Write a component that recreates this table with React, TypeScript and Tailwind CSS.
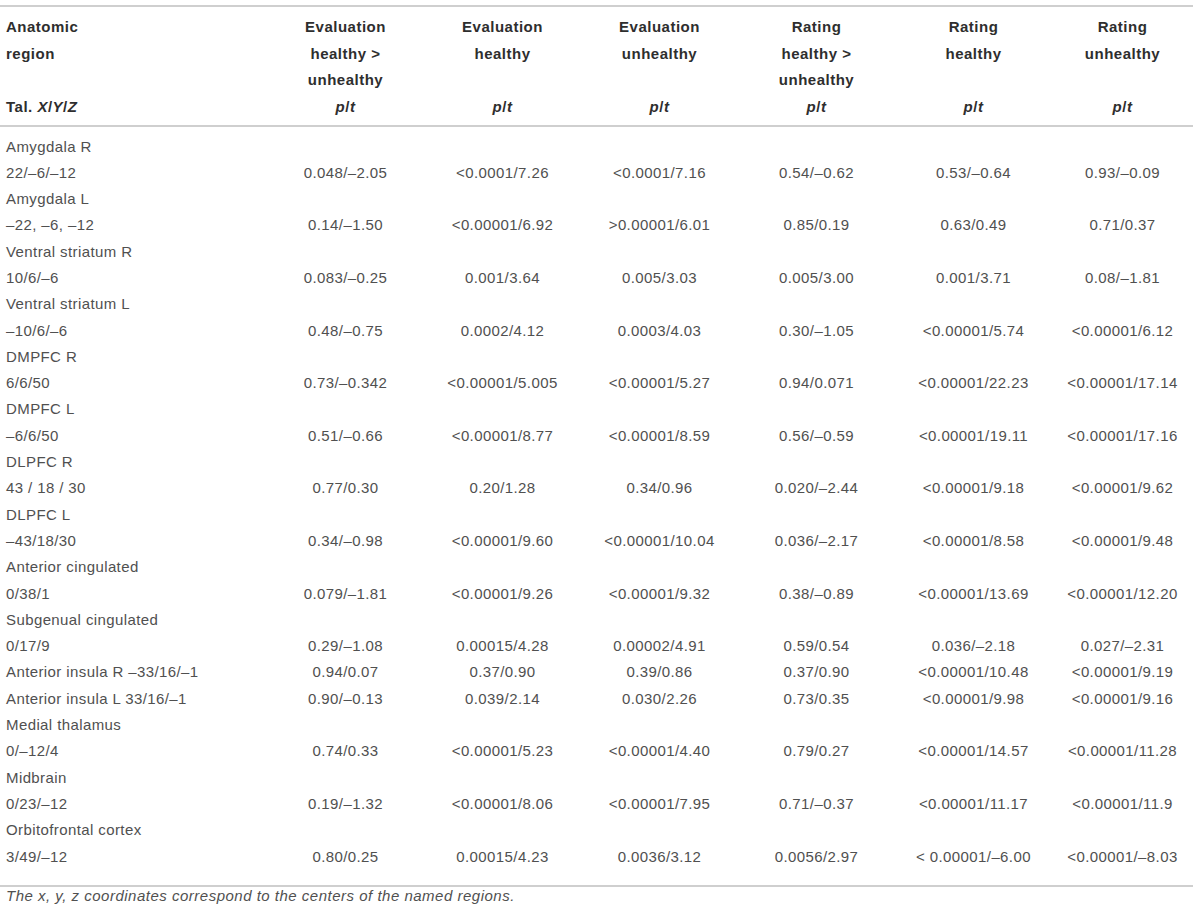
import React from "react";

type Row =
  | { name: string; coord: string; v: string[] }
  | { single: string; v: string[] };

const rows: Row[] = [
  { name: "Amygdala R", coord: "22/–6/–12", v: ["0.048/–2.05", "<0.0001/7.26", "<0.0001/7.16", "0.54/–0.62", "0.53/–0.64", "0.93/–0.09"] },
  { name: "Amygdala L", coord: "–22, –6, –12", v: ["0.14/–1.50", "<0.00001/6.92", ">0.00001/6.01", "0.85/0.19", "0.63/0.49", "0.71/0.37"] },
  { name: "Ventral striatum R", coord: "10/6/–6", v: ["0.083/–0.25", "0.001/3.64", "0.005/3.03", "0.005/3.00", "0.001/3.71", "0.08/–1.81"] },
  { name: "Ventral striatum L", coord: "–10/6/–6", v: ["0.48/–0.75", "0.0002/4.12", "0.0003/4.03", "0.30/–1.05", "<0.00001/5.74", "<0.00001/6.12"] },
  { name: "DMPFC R", coord: "6/6/50", v: ["0.73/–0.342", "<0.00001/5.005", "<0.00001/5.27", "0.94/0.071", "<0.00001/22.23", "<0.00001/17.14"] },
  { name: "DMPFC L", coord: "–6/6/50", v: ["0.51/–0.66", "<0.00001/8.77", "<0.00001/8.59", "0.56/–0.59", "<0.00001/19.11", "<0.00001/17.16"] },
  { name: "DLPFC R", coord: "43 / 18 / 30", v: ["0.77/0.30", "0.20/1.28", "0.34/0.96", "0.020/–2.44", "<0.00001/9.18", "<0.00001/9.62"] },
  { name: "DLPFC L", coord: "–43/18/30", v: ["0.34/–0.98", "<0.00001/9.60", "<0.00001/10.04", "0.036/–2.17", "<0.00001/8.58", "<0.00001/9.48"] },
  { name: "Anterior cingulated", coord: "0/38/1", v: ["0.079/–1.81", "<0.00001/9.26", "<0.00001/9.32", "0.38/–0.89", "<0.00001/13.69", "<0.00001/12.20"] },
  { name: "Subgenual cingulated", coord: "0/17/9", v: ["0.29/–1.08", "0.00015/4.28", "0.00002/4.91", "0.59/0.54", "0.036/–2.18", "0.027/–2.31"] },
  { single: "Anterior insula R –33/16/–1", v: ["0.94/0.07", "0.37/0.90", "0.39/0.86", "0.37/0.90", "<0.00001/10.48", "<0.00001/9.19"] },
  { single: "Anterior insula L 33/16/–1", v: ["0.90/–0.13", "0.039/2.14", "0.030/2.26", "0.73/0.35", "<0.00001/9.98", "<0.00001/9.16"] },
  { name: "Medial thalamus", coord: "0/–12/4", v: ["0.74/0.33", "<0.00001/5.23", "<0.00001/4.40", "0.79/0.27", "<0.00001/14.57", "<0.00001/11.28"] },
  { name: "Midbrain", coord: "0/23/–12", v: ["0.19/–1.32", "<0.00001/8.06", "<0.00001/7.95", "0.71/–0.37", "<0.00001/11.17", "<0.00001/11.9"] },
  { name: "Orbitofrontal cortex", coord: "3/49/–12", v: ["0.80/0.25", "0.00015/4.23", "0.0036/3.12", "0.0056/2.97", "< 0.00001/–6.00", "<0.00001/–8.03"] },
];

const headers: string[][] = [
  ["Evaluation", "healthy >", "unhealthy"],
  ["Evaluation", "healthy", ""],
  ["Evaluation", "unhealthy", ""],
  ["Rating", "healthy >", "unhealthy"],
  ["Rating", "healthy", ""],
  ["Rating", "unhealthy", ""],
];

const grid = "grid grid-cols-[267px_157px_157px_157px_157px_157px_141px]";

function Line({ first, values }: { first: string; values: string[] | null }) {
  return (
    <div className={`${grid} h-[26.3px] leading-[26.3px]`}>
      <div className="pl-[6px] whitespace-nowrap">{first}</div>
      {(values ?? ["", "", "", "", "", ""]).map((v, i) => (
        <div key={i} className="text-center whitespace-nowrap">
          {v}
        </div>
      ))}
    </div>
  );
}

export default function App() {
  return (
    <div className="w-[1200px] h-[918px] bg-white font-['Liberation_Sans',Arial,sans-serif]">
      <div className="w-[1193px] pt-[5px]">
        <div className="border-t-2 border-b-2 border-[#cfcfcf] pt-[7px] pb-[5px] text-[15px] tracking-[0.5px] font-bold text-[#2e2e2e] leading-[26.5px]">
          <div className={grid}>
            <div className="pl-[6px] flex flex-col">
              <div className="h-[26.5px]">Anatomic</div>
              <div className="h-[26.5px]">region</div>
              <div className="h-[26.5px]"></div>
              <div className="h-[26.5px]">
                Tal. <i>X</i>/<i>Y</i>/<i>Z</i>
              </div>
            </div>
            {headers.map((h, i) => (
              <div key={i} className="flex flex-col text-center">
                {h.map((t, j) => (
                  <div key={j} className="h-[26.5px]">
                    {t}
                  </div>
                ))}
                <div className="h-[26.5px]">
                  <i>p</i>/<i>t</i>
                </div>
              </div>
            ))}
          </div>
        </div>
        <div className="pt-[6.5px] pb-[15px] border-b-2 border-[#cfcfcf] text-[15px] tracking-[0.4px] text-[#505050]">
          {rows.map((r, i) =>
            "single" in r ? (
              <Line key={i} first={r.single} values={r.v} />
            ) : (
              <React.Fragment key={i}>
                <Line first={r.name} values={null} />
                <Line first={r.coord} values={r.v} />
              </React.Fragment>
            )
          )}
        </div>
        <div className="pl-[6px] pt-0 text-[15px] tracking-[0.5px] italic text-[#505050] leading-[18px]">
          The x, y, z coordinates correspond to the centers of the named regions.
        </div>
      </div>
    </div>
  );
}
